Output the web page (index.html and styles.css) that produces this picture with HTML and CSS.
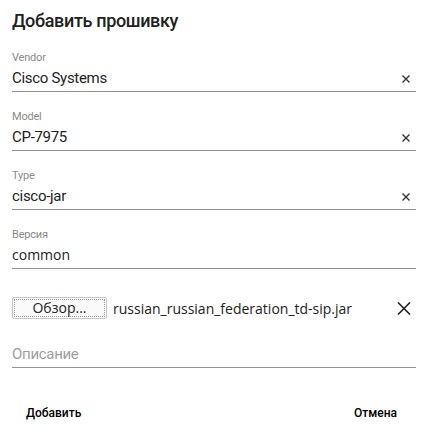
FILE: index.html
```html
<!DOCTYPE html>
<html lang="ru">
<head>
<meta charset="utf-8">
<title>Добавить прошивку</title>
<link rel="stylesheet" href="styles.css">
</head>
<body>
<div class="dialog">
  <h1 class="title">Добавить прошивку</h1>

  <div class="field">
    <div class="label">Vendor</div>
    <div class="row">
      <span class="value">Cisco Systems</span>
      <svg class="clear" width="8" height="8" viewBox="0 0 8 8"><path d="M0.5 0.5L7.5 7.5M7.5 0.5L0.5 7.5" stroke="#333" stroke-width="1.4" fill="none"/></svg>
    </div>
  </div>

  <div class="field">
    <div class="label">Model</div>
    <div class="row">
      <span class="value">CP-7975</span>
      <svg class="clear" width="8" height="8" viewBox="0 0 8 8"><path d="M0.5 0.5L7.5 7.5M7.5 0.5L0.5 7.5" stroke="#333" stroke-width="1.4" fill="none"/></svg>
    </div>
  </div>

  <div class="field">
    <div class="label">Type</div>
    <div class="row">
      <span class="value">cisco-jar</span>
      <svg class="clear" width="8" height="8" viewBox="0 0 8 8"><path d="M0.5 0.5L7.5 7.5M7.5 0.5L0.5 7.5" stroke="#333" stroke-width="1.4" fill="none"/></svg>
    </div>
  </div>

  <div class="field">
    <div class="label">Версия</div>
    <div class="row">
      <span class="value alt">common</span>
    </div>
  </div>

  <div class="file-row">
    <button class="browse"><span class="browse-inner">Обзор...</span></button>
    <span class="fname">russian_russian_federation_td-sip.jar</span>
    <svg class="remove" width="14" height="13" viewBox="0 0 14 13"><path d="M1 0.5L13 12.5M13 0.5L1 12.5" stroke="#222" stroke-width="1.6" fill="none"/></svg>
  </div>

  <div class="field desc">
    <div class="row">
      <span class="placeholder">Описание</span>
    </div>
  </div>

  <div class="actions">
    <button class="btn">Добавить</button>
    <button class="btn btn-cancel">Отмена</button>
  </div>
</div>
</body>
</html>
```

FILE: styles.css
```css
html, body {
  margin: 0;
  padding: 0;
  background: #fff;
}

.dialog {
  width: 428px;
  box-sizing: border-box;
  padding: 9px 12px 0 12px;
  font-family: Roboto, "Liberation Sans", sans-serif;
  color: #222;
  display: flex;
  flex-direction: column;
}

.title {
  margin: 0 0 18px 0;
  font-size: 18px;
  line-height: 24px;
  font-weight: 500;
  letter-spacing: -0.35px;
  color: #212121;
}

.field {
  display: flex;
  flex-direction: column;
  margin-bottom: 18px;
}

.label {
  font-size: 11px;
  line-height: 13px;
  color: #8a8a8a;
  letter-spacing: -0.2px;
  margin-bottom: 4px;
}

.row {
  display: flex;
  align-items: center;
  justify-content: space-between;
  height: 20px;
  padding-bottom: 3px;
  border-bottom: 1px solid #929292;
}

.value {
  font-size: 15px;
  line-height: 20px;
  letter-spacing: -0.3px;
  color: #222;
}

.value.alt {
  font-family: "Open Sans", "DejaVu Sans", sans-serif;
  font-size: 14px;
  letter-spacing: 0;
}

.clear {
  margin-right: 6px;
  margin-top: 2px;
}

.file-row {
  display: flex;
  align-items: center;
  margin-top: 10px;
  height: 22px;
  margin-bottom: 25px;
}

.browse {
  width: 95px;
  height: 22px;
  padding: 1px;
  border: 1px solid #c8c8c8;
  border-radius: 2px;
  background: #fafafa;
  font-family: "Open Sans", "DejaVu Sans", sans-serif;
  font-size: 14px;
  color: #222;
  display: flex;
  box-sizing: border-box;
}

.browse-inner {
  flex: 1;
  border: 1px dotted #9a9a9a;
  line-height: 16px;
  text-align: center;
}

.fname {
  margin-left: 6px;
  flex: 1;
  font-family: "Open Sans", "DejaVu Sans", sans-serif;
  font-size: 14px;
  color: #222;
}

.remove {
  margin-right: 5px;
}

.placeholder {
  font-size: 15px;
  line-height: 20px;
  letter-spacing: -0.3px;
  color: #9e9e9e;
}

.actions {
  display: flex;
  justify-content: space-between;
  margin-top: 12px;
}

.btn {
  background: none;
  border: none;
  padding: 8px 14px;
  font-family: Roboto, "Liberation Sans", sans-serif;
  font-size: 12px;
  font-weight: 500;
  color: #000;
}

.btn-cancel {
  margin-right: 5px;
}
```
